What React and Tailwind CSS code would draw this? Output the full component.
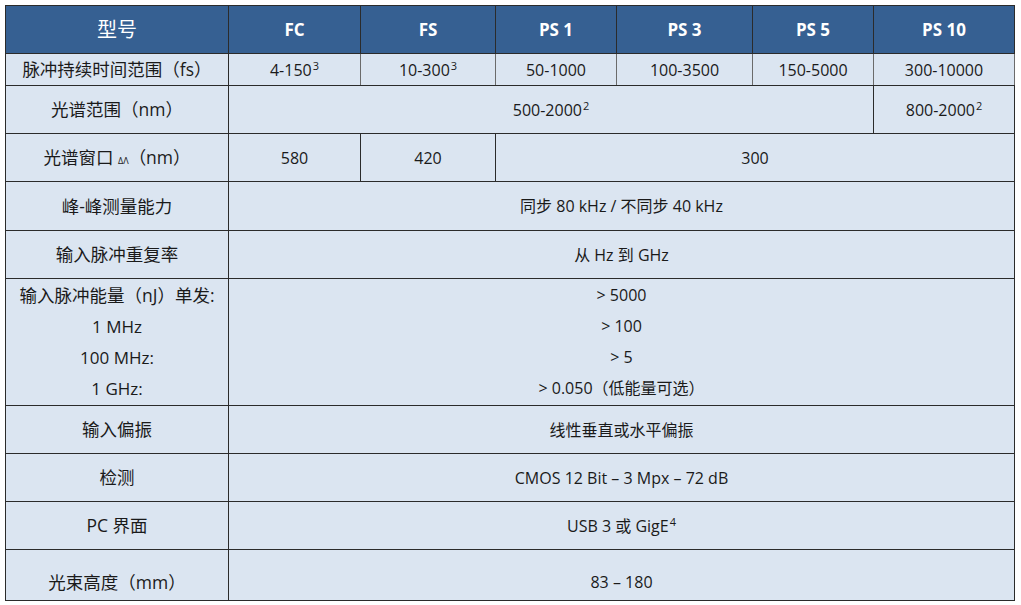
import React from "react";

const cjk = { fontFamily: '"Open Sans", "Noto Sans CJK SC", sans-serif' };

const Sup = ({ children }) => (
  <sup className="text-[11px] relative -top-[6px] ml-[1px]">{children}</sup>
);

const Td = ({ children, className = "", ...rest }) => (
  <td
    className={"border border-[#2b2b2b] text-center align-middle px-1 " + className}
    {...rest}
  >
    {children}
  </td>
);

export default function App() {
  const heads = ["FC", "FS", "PS 1", "PS 3", "PS 5", "PS 10"];
  const durations = [
    ["4-150", "3"],
    ["10-300", "3"],
    ["50-1000"],
    ["100-3500"],
    ["150-5000"],
    ["300-10000"],
  ];

  return (
    <div className="w-[1021px] h-[605px] bg-white pt-[5px] pl-[5px]" style={cjk}>
      <table className="table-fixed border-collapse w-[1009px] text-[16px] text-[#1a1a1a] bg-[#dbe5f1]">
        <colgroup>
          <col className="w-[223px]" />
          <col className="w-[132px]" />
          <col className="w-[135px]" />
          <col className="w-[121px]" />
          <col className="w-[136px]" />
          <col className="w-[121px]" />
          <col className="w-[141px]" />
        </colgroup>
        <tbody>
          <tr className="h-[48px] bg-[#366092] text-white font-bold">
            <Td className="text-[20px] font-normal">型号</Td>
            {heads.map((h) => (
              <Td key={h} className="text-[17px]">
                {h}
              </Td>
            ))}
          </tr>

          <tr className="h-[32px]">
            <Td className="text-[17.5px] px-0 whitespace-nowrap">脉冲持续时间范围（fs）</Td>
            {durations.map(([v, s]) => (
              <Td key={v} className="border-x-[#6b6b6b]">
                {v}
                {s && <Sup>{s}</Sup>}
              </Td>
            ))}
          </tr>

          <tr className="h-[48px]">
            <Td className="text-[17.5px]">光谱范围（nm）</Td>
            <Td colSpan={5}>
              500-2000<Sup>2</Sup>
            </Td>
            <Td>
              800-2000<Sup>2</Sup>
            </Td>
          </tr>

          <tr className="h-[48px]">
            <Td className="text-[17.5px]">
              光谱窗口 <span className="text-[9px]">ΔΛ</span>（nm）
            </Td>
            <Td>580</Td>
            <Td>420</Td>
            <Td colSpan={4}>300</Td>
          </tr>

          <tr className="h-[49px]">
            <Td className="text-[17.5px]">峰-峰测量能力</Td>
            <Td colSpan={6}>同步 80 kHz / 不同步 40 kHz</Td>
          </tr>

          <tr className="h-[48px]">
            <Td className="text-[17.5px]">输入脉冲重复率</Td>
            <Td colSpan={6}>从 Hz 到 GHz</Td>
          </tr>

          <tr className="h-[127px]">
            <Td className="text-[17.5px] px-0">
              <div className="flex flex-col leading-[31px] whitespace-nowrap">
                <span>输入脉冲能量（nJ）单发:</span>
                <span className="text-[17px]">1 MHz</span>
                <span className="text-[17px]">100 MHz:</span>
                <span className="text-[17px]">1 GHz:</span>
              </div>
            </Td>
            <Td colSpan={6}>
              <div className="flex flex-col leading-[31px]">
                <span>&gt; 5000</span>
                <span>&gt; 100</span>
                <span>&gt; 5</span>
                <span>&gt; 0.050（低能量可选）</span>
              </div>
            </Td>
          </tr>

          <tr className="h-[48px]">
            <Td className="text-[17.5px]">输入偏振</Td>
            <Td colSpan={6}>线性垂直或水平偏振</Td>
          </tr>

          <tr className="h-[48px]">
            <Td className="text-[17.5px]">检测</Td>
            <Td colSpan={6}>CMOS 12 Bit – 3 Mpx – 72 dB</Td>
          </tr>

          <tr className="h-[48px]">
            <Td className="text-[17.5px]">PC 界面</Td>
            <Td colSpan={6}>
              USB 3 或 GigE<Sup>4</Sup>
            </Td>
          </tr>

          <tr className="h-[51px]">
            <Td className="text-[17.5px] pt-[14px]">光束高度（mm）</Td>
            <Td colSpan={6} className="pt-[14px]">
              83 – 180
            </Td>
          </tr>
        </tbody>
      </table>
    </div>
  );
}
